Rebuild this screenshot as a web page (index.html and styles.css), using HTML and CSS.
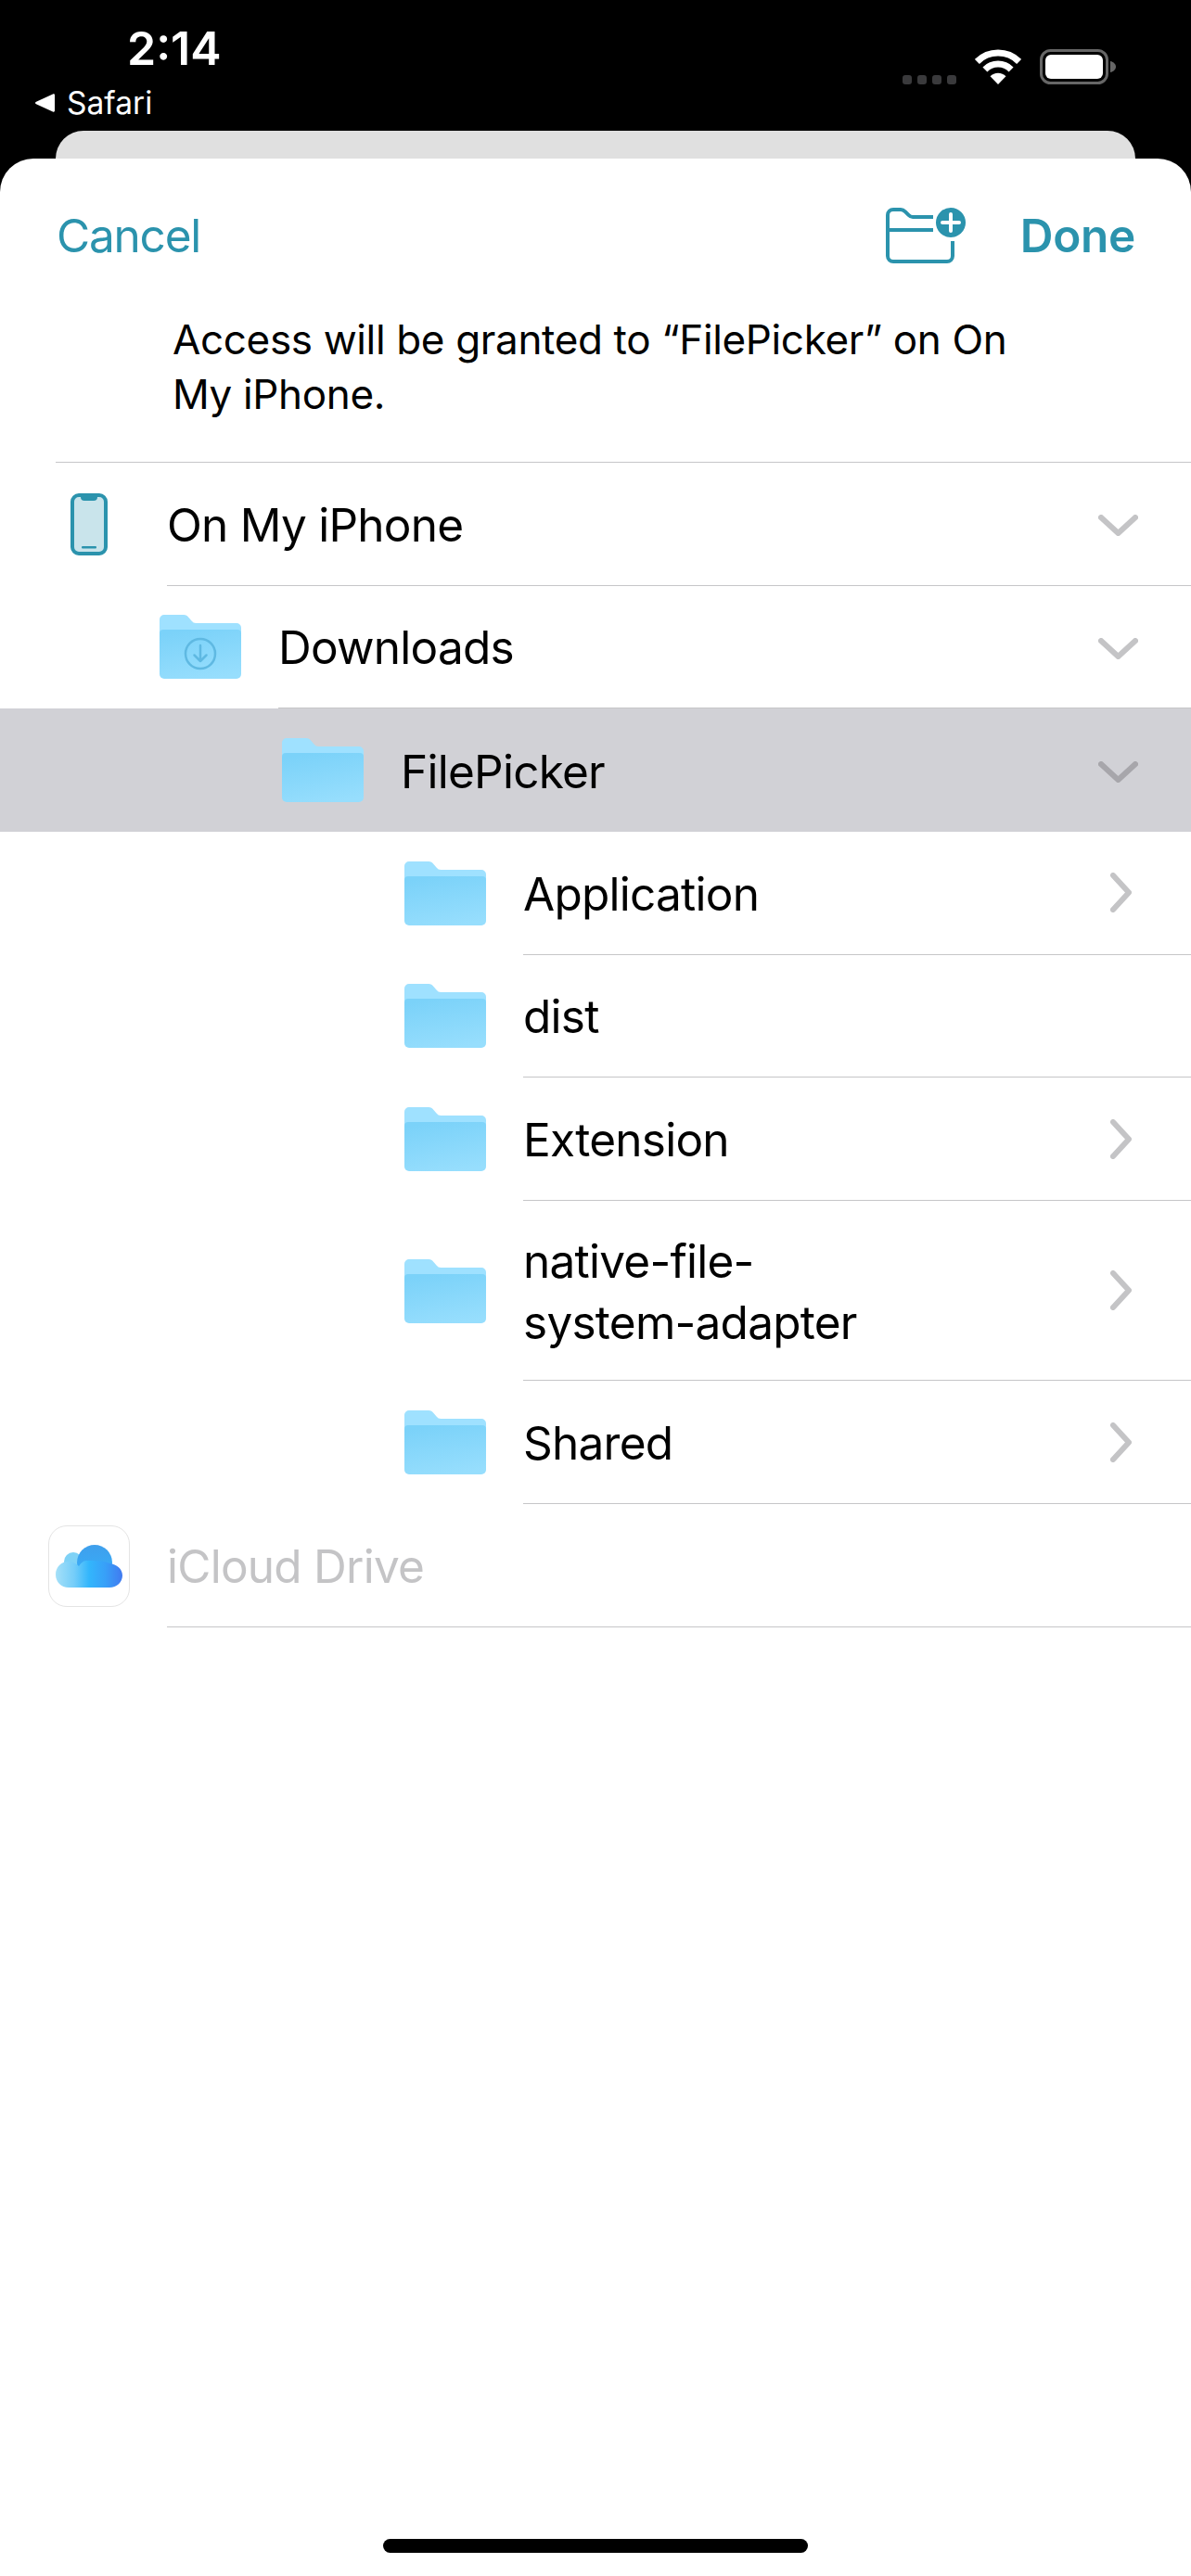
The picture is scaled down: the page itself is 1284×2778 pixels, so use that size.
FILE: index.html
```html
<!DOCTYPE html>
<html lang="en">
<head>
<meta charset="utf-8">
<title>FilePicker</title>
<link rel="stylesheet" href="styles.css">
</head>
<body>
<svg class="defs" width="0" height="0" aria-hidden="true">
  <defs>
    <linearGradient id="folderFront" x1="0.35" y1="0" x2="0.65" y2="1">
      <stop offset="0" stop-color="#7bd2f9"/>
      <stop offset="1" stop-color="#97defd"/>
    </linearGradient>
    <linearGradient id="cloudBody" x1="0" y1="0" x2="1" y2="0">
      <stop offset="0" stop-color="#a5e0f8"/>
      <stop offset="0.28" stop-color="#74cdf9"/>
      <stop offset="0.5" stop-color="#33b6fc"/>
      <stop offset="0.75" stop-color="#389ff8"/>
      <stop offset="1" stop-color="#417af0"/>
    </linearGradient>
    <linearGradient id="cloudTop" x1="0" y1="0" x2="0" y2="1">
      <stop offset="0" stop-color="#3f9fec"/>
      <stop offset="1" stop-color="#35b0fb"/>
    </linearGradient>
    <symbol id="folder" viewBox="0 0 88 69">
      <path d="M0 5a5 5 0 0 1 5-5h21c2.500 0 4 1 5.500 3l3 3.500c1.500 1.700 2.500 2.500 5 2.500H83a5 5 0 0 1 5 5v10H0z" fill="#9fe1ff"/>
      <path d="M0 20a4 4 0 0 1 4-4h80a4 4 0 0 1 4 4v44a5 5 0 0 1-5 5H5a5 5 0 0 1-5-5z" fill="url(#folderFront)"/>
    </symbol>
    <symbol id="chev-down" viewBox="0 0 43 23">
      <path d="M3 3l18.500 17L40 3" fill="none" stroke="currentColor" stroke-width="6" stroke-linecap="round" stroke-linejoin="round"/>
    </symbol>
    <symbol id="chev-right" viewBox="0 0 23 43">
      <path d="M3 3l17 18.500L3 40" fill="none" stroke="currentColor" stroke-width="6" stroke-linecap="round" stroke-linejoin="round"/>
    </symbol>
  </defs>
</svg>

<header class="status">
  <div class="status-left">
    <div class="time">2:14</div>
    <div class="back">
      <svg class="back-arrow" viewBox="0 0 21 20"><path d="M21 1.500v17c0 1-1 1.500-2 1L1 11.200c-1.300-.7-1.300-1.700 0-2.400L19 .5c1-.5 2 0 2 1z" fill="#fff"/></svg>
      <span>Safari</span>
    </div>
  </div>
  <div class="status-right">
    <div class="signal"><i></i><i></i><i></i><i></i></div>
    <svg class="wifi" viewBox="0 0 50 38">
      <path d="M2.400 13.400a32 32 0 0 1 45.200 0" fill="none" stroke="#fff" stroke-width="7"/>
      <path d="M10.900 21.900a20 20 0 0 1 28.200 0" fill="none" stroke="#fff" stroke-width="7"/>
      <path d="M25 38l-8.500-8.800a12 12 0 0 1 17 0z" fill="#fff"/>
    </svg>
    <svg class="battery" viewBox="0 0 82 38">
      <rect x="1.500" y="1.500" width="71" height="35" rx="10" fill="none" stroke="#666" stroke-width="3"/>
      <rect x="6" y="6" width="62" height="26" rx="6" fill="#fff"/>
      <path d="M76 13c3 .5 6 3 6 6s-3 5.500-6 6z" fill="#666"/>
    </svg>
  </div>
</header>

<div class="back-card"></div>

<main class="sheet">
  <nav class="navbar">
    <span class="cancel">Cancel</span>
    <div class="nav-actions">
      <svg class="new-folder" viewBox="0 0 86 60">
        <path d="M51 10H29c-2 0-3-.7-4.500-2.200L21 4.300C19.500 2.800 18.500 2 16 2H8a6 6 0 0 0-6 6v44a6 6 0 0 0 6 6h58a6 6 0 0 0 6-6V36" fill="none" stroke="#2b93ad" stroke-width="4"/>
        <path d="M2 24h49" fill="none" stroke="#2b93ad" stroke-width="4"/>
        <circle cx="70" cy="16" r="16" fill="#2b93ad"/>
        <path d="M70 7v18M61 16h18" fill="none" stroke="#fff" stroke-width="4" stroke-linecap="round"/>
      </svg>
      <span class="done">Done</span>
    </div>
  </nav>
  <p class="prompt">Access will be granted to “FilePicker” on On<br>My iPhone.</p>

  <div class="list">
    <div class="row level-0">
      <div class="icon">
        <svg class="phone" viewBox="0 0 40 67">
          <rect x="2" y="2" width="36" height="63" rx="7" fill="#c9e4eb" stroke="#2b93ad" stroke-width="4"/>
          <path d="M11 2h18v2a4 4 0 0 1-4 4H15a4 4 0 0 1-4-4z" fill="#2b93ad"/>
          <rect x="12" y="57" width="16" height="2.500" rx="1" fill="#2b93ad"/>
        </svg>
      </div>
      <div class="body">
        <span class="title">On My iPhone</span>
        <svg class="chev-down"><use href="#chev-down"/></svg>
      </div>
    </div>

    <div class="row level-1">
      <div class="icon">
        <svg class="folder" viewBox="0 0 88 69">
          <use href="#folder" width="88" height="69"/>
          <circle cx="44" cy="42" r="16" fill="none" stroke="#5fb9e2" stroke-width="2.500"/>
          <path d="M44 33v17M37.500 43.500L44 50l6.500-6.500" fill="none" stroke="#5fb9e2" stroke-width="2.500" stroke-linecap="round" stroke-linejoin="round"/>
        </svg>
      </div>
      <div class="body">
        <span class="title">Downloads</span>
        <svg class="chev-down"><use href="#chev-down"/></svg>
      </div>
    </div>

    <div class="row level-2 selected">
      <div class="icon"><svg class="folder"><use href="#folder"/></svg></div>
      <div class="body">
        <span class="title">FilePicker</span>
        <svg class="chev-down"><use href="#chev-down"/></svg>
      </div>
    </div>

    <div class="row level-3">
      <div class="icon"><svg class="folder"><use href="#folder"/></svg></div>
      <div class="body">
        <span class="title">Application</span>
        <svg class="chev-right"><use href="#chev-right"/></svg>
      </div>
    </div>

    <div class="row level-3">
      <div class="icon"><svg class="folder"><use href="#folder"/></svg></div>
      <div class="body">
        <span class="title">dist</span>
      </div>
    </div>

    <div class="row level-3">
      <div class="icon"><svg class="folder"><use href="#folder"/></svg></div>
      <div class="body">
        <span class="title">Extension</span>
        <svg class="chev-right"><use href="#chev-right"/></svg>
      </div>
    </div>

    <div class="row level-3 tall">
      <div class="icon"><svg class="folder"><use href="#folder"/></svg></div>
      <div class="body">
        <span class="title">native-file-<br>system-adapter</span>
        <svg class="chev-right"><use href="#chev-right"/></svg>
      </div>
    </div>

    <div class="row level-3">
      <div class="icon"><svg class="folder"><use href="#folder"/></svg></div>
      <div class="body">
        <span class="title">Shared</span>
        <svg class="chev-right"><use href="#chev-right"/></svg>
      </div>
    </div>

    <div class="row level-0 disabled">
      <div class="icon">
        <div class="app-tile">
          <svg class="cloud" viewBox="0 0 72 46">
            <circle cx="19" cy="18" r="10" fill="#7fd2f6"/>
            <circle cx="42" cy="19" r="19" fill="url(#cloudTop)"/>
            <path d="M14 18c4 0 8 2 11 5 2-3 5-6 8-6 12 0 18 0 25 3 8 1 14 6 14 13s-6 13-14 13H14C6 46 0 40 0 32s6-14 14-14z" fill="url(#cloudBody)"/>
          </svg>
        </div>
      </div>
      <div class="body">
        <span class="title">iCloud Drive</span>
      </div>
    </div>
  </div>

  <div class="home-indicator"></div>
</main>
</body>
</html>
```

FILE: styles.css
```css
* {
  box-sizing: border-box;
}

html,
body {
  margin: 0;
  height: 2778px;
  overflow: hidden;
  background: #000;
}

body {
  display: flex;
  flex-direction: column;
  font-family: Inter, "Liberation Sans", sans-serif;
  color: #000;
}

.defs {
  position: absolute;
}

/* Status bar */
.status {
  height: 141px;
  flex: none;
  display: flex;
  justify-content: space-between;
  color: #fff;
}

.status-left {
  padding: 24px 0 0 38px;
}

.time {
  padding-left: 99px;
  font-size: 50px;
  line-height: 56px;
  font-weight: 600;
  letter-spacing: 0;
}

.back {
  margin-top: 13px;
  display: flex;
  align-items: center;
  gap: 13px;
  font-size: 33.500px;
  line-height: 36px;
  font-weight: 400;
}

.back-arrow {
  width: 21px;
  height: 20px;
}

.status-right {
  padding: 53px 81px 0 0;
  display: flex;
  align-items: flex-end;
  align-self: flex-start;
  gap: 20px;
}

.signal {
  display: flex;
  gap: 6px;
}

.signal i {
  width: 10px;
  height: 10px;
  border-radius: 3px;
  background: #3a3a3c;
}

.wifi {
  width: 50px;
  height: 38px;
}

.battery {
  width: 82px;
  height: 38px;
}

/* Stacked card behind the sheet */
.back-card {
  flex: none;
  height: 60px;
  margin: 0 60px -30px;
  border-radius: 30px 30px 0 0;
  background: #e0e0e0;
}

/* Sheet */
.sheet {
  position: relative;
  flex: 1;
  border-radius: 36px 36px 0 0;
  background: #fff;
}

.navbar {
  height: 166px;
  padding: 0 60px 0 61px;
  display: flex;
  align-items: center;
  justify-content: space-between;
  font-size: 49.500px;
  color: #2b93ad;
}

.cancel {
  letter-spacing: -1.200px;
}

.nav-actions {
  display: flex;
  align-items: center;
  gap: 59px;
}

.new-folder {
  width: 86px;
  height: 60px;
}

.done {
  font-weight: 600;
  letter-spacing: -0.300px;
}

.prompt {
  margin: 0;
  padding: 0 0 43px 186px;
  font-size: 44px;
  line-height: 59px;
  letter-spacing: -0.350px;
}

/* List */
.list {
  margin-left: 60px;
  border-top: 1px solid #c6c6c8;
}

.row {
  margin-left: -60px;
  display: flex;
  height: 132.670px;
}

.row.tall {
  height: 194.500px;
}

.level-0 {
  padding-left: 52px;
}

.level-1 {
  padding-left: 172px;
}

.level-2 {
  padding-left: 304px;
}

.level-3 {
  padding-left: 436px;
}

.selected {
  background: #d1d1d6;
}

.icon {
  width: 128px;
  flex: none;
  display: flex;
  align-items: center;
}

.folder {
  width: 88px;
  height: 69px;
}

.phone {
  width: 40px;
  height: 67px;
  margin-left: 24px;
}

.app-tile {
  width: 88px;
  height: 88px;
  margin-top: 2px;
  display: flex;
  align-items: center;
  justify-content: center;
  border: 1px solid #e4e4e4;
  border-radius: 20px;
  background: #fff;
}

.cloud {
  width: 72px;
  height: 46px;
}

.body {
  flex: 1;
  min-width: 0;
  display: flex;
  align-items: center;
  justify-content: space-between;
  border-bottom: 1px solid #c6c6c8;
}

.selected .body {
  border-bottom: 0;
}

.title {
  padding-top: 2px;
  font-size: 49.500px;
  line-height: 66px;
  letter-spacing: -0.750px;
}

.chev-down,
.chev-right {
  flex: none;
  color: #c4c4c6;
}

.chev-down {
  width: 43px;
  height: 23px;
  margin: 4px 57px 0 0;
}

.chev-right {
  width: 23px;
  height: 43px;
  margin-right: 64px;
}

.selected .chev-down {
  color: #a7a6ab;
}

.disabled .title {
  color: #c4c4c6;
}

.home-indicator {
  position: absolute;
  left: 413px;
  bottom: 25px;
  width: 458px;
  height: 15px;
  border-radius: 8px;
  background: #000;
}
```
